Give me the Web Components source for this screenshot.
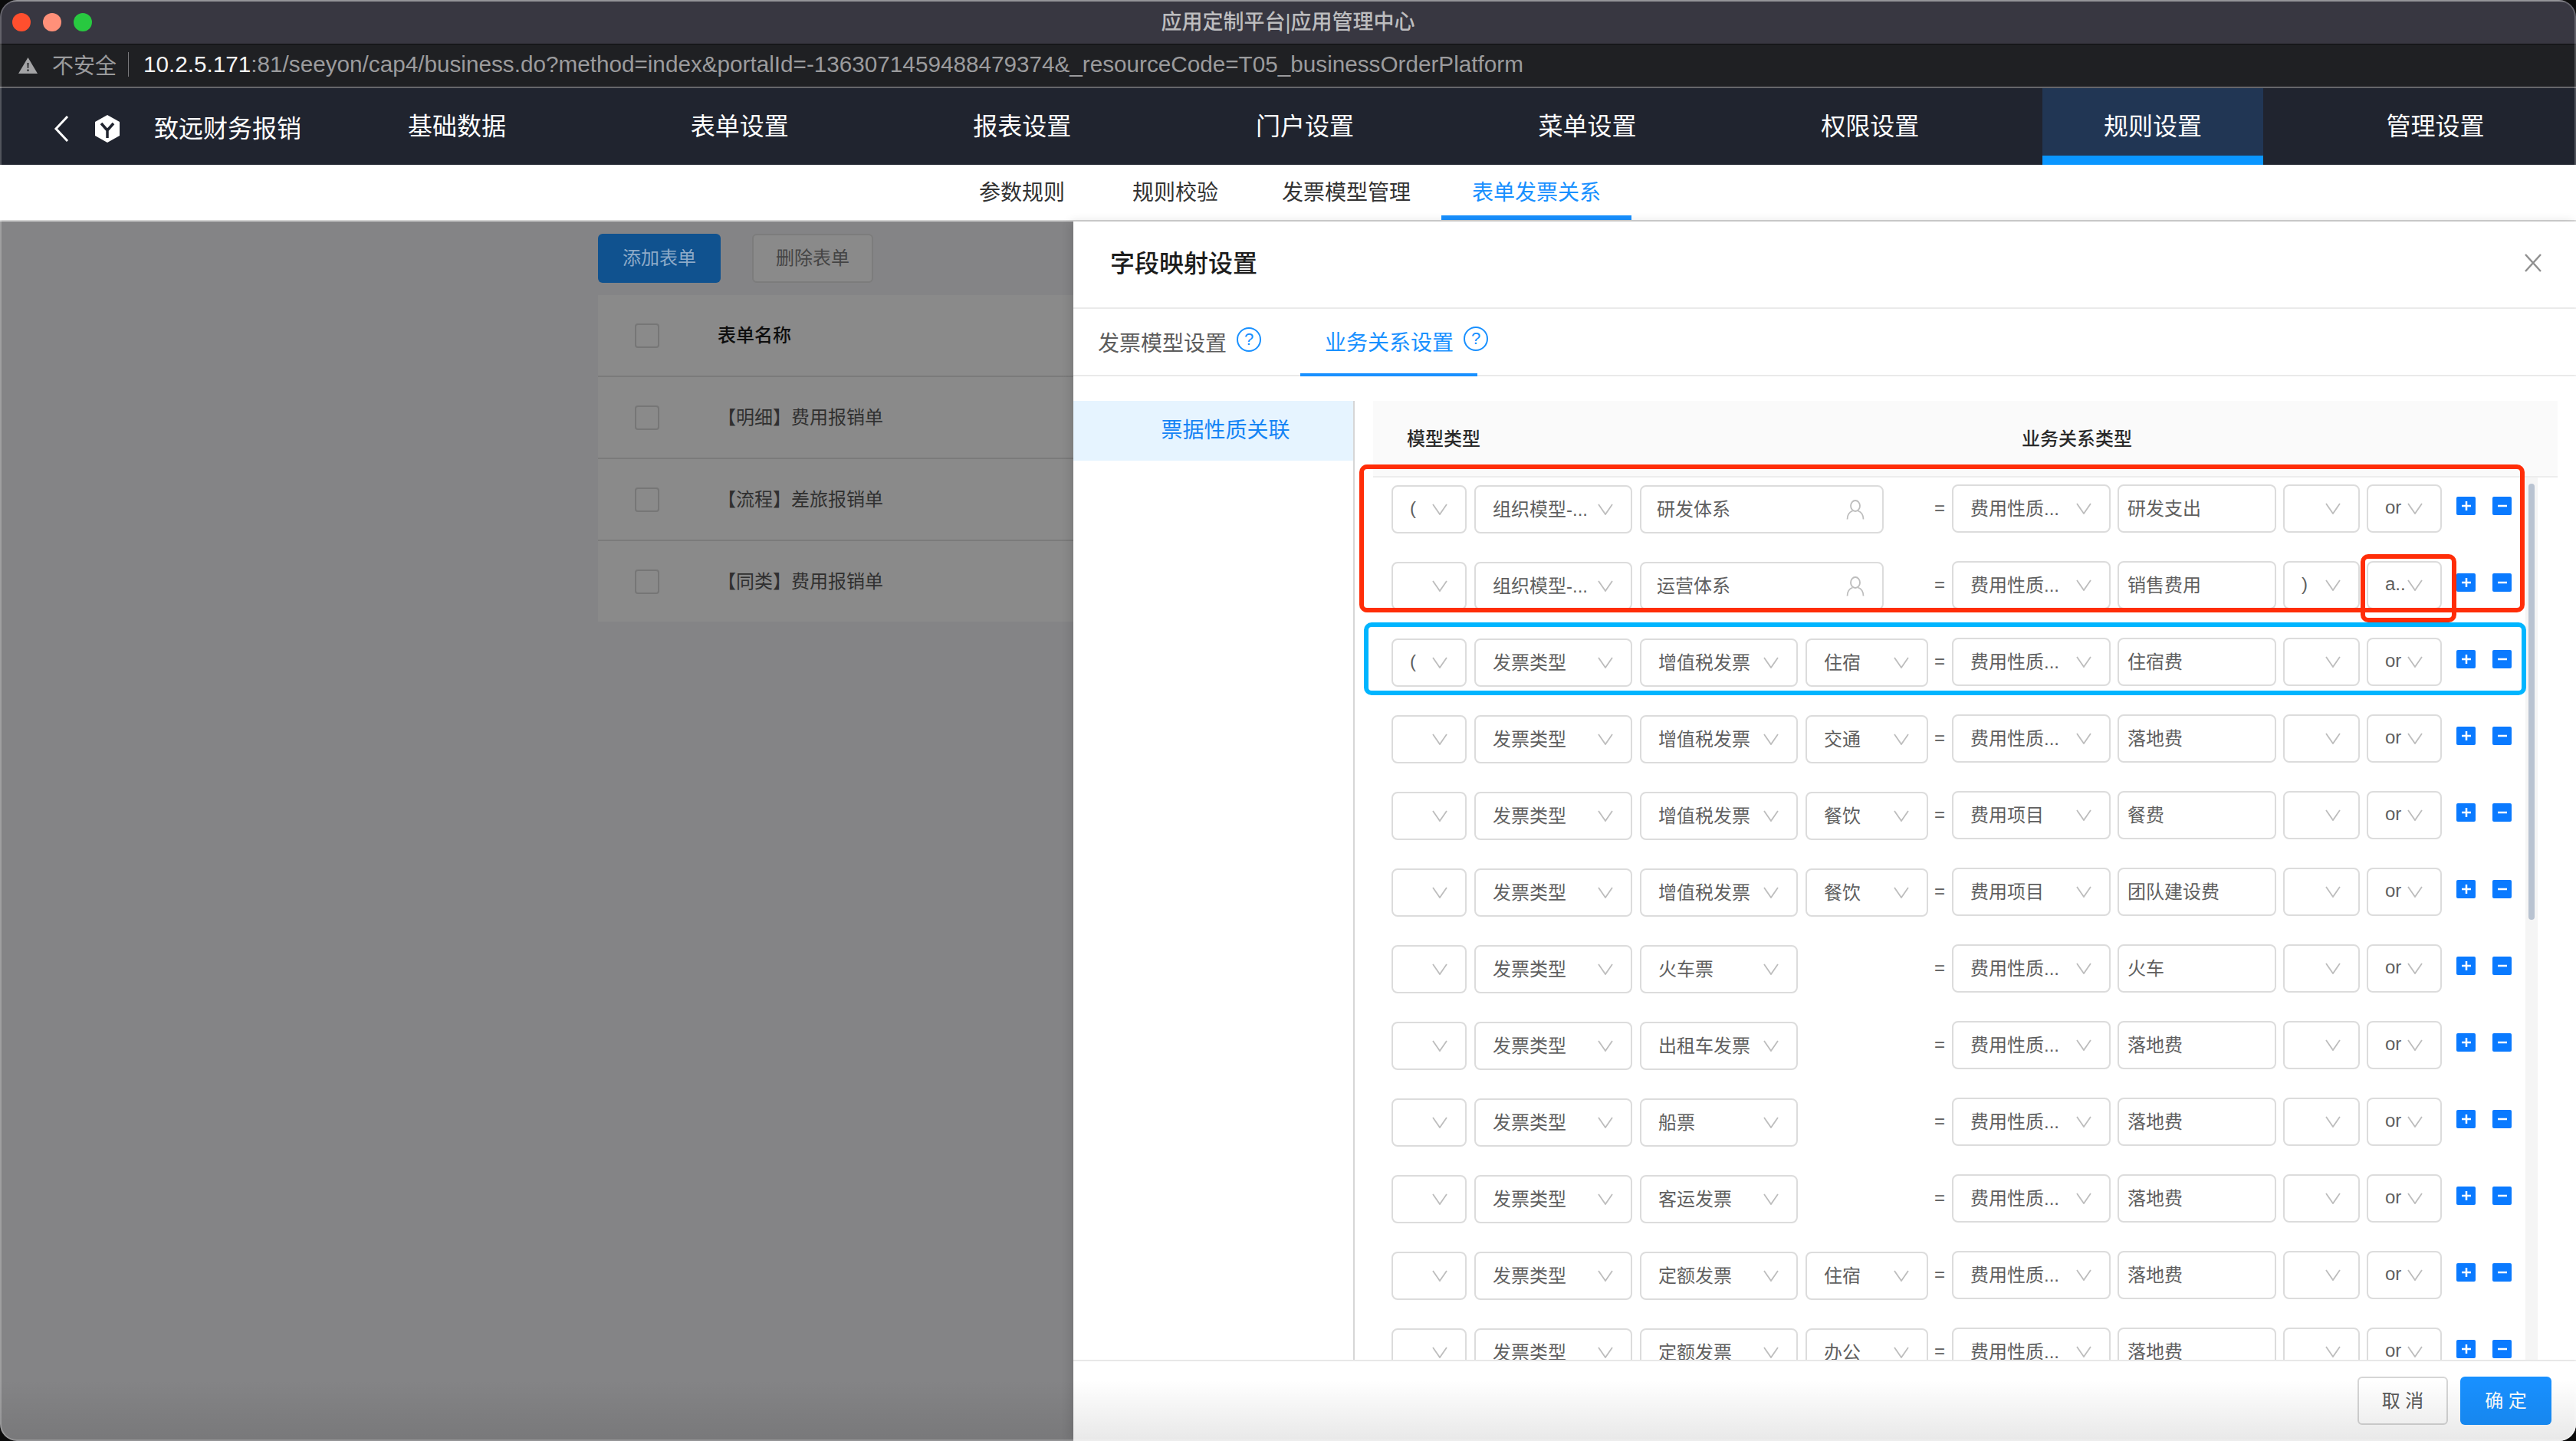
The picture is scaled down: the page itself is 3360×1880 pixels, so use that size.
<!DOCTYPE html>
<html lang="zh-CN">
<head>
<meta charset="utf-8">
<title>应用定制平台|应用管理中心</title>
<style>
  html, body { margin: 0; height: 100%; background: #0b0b0b; overflow: hidden; }
  body { font-family: "Liberation Sans", "Noto Sans CJK SC", sans-serif; }
</style>
</head>
<body>
<app-window></app-window>
<script>
const NAV_ITEMS = ["基础数据", "表单设置", "报表设置", "门户设置", "菜单设置", "权限设置", "规则设置", "管理设置"];
const LIST_ROWS = ["【明细】费用报销单", "【流程】差旅报销单", "【同类】费用报销单"];
const ORG = "组织模型-...";
const INV = "发票类型";
const FEE = "费用性质...";
const ITEM = "费用项目";
const VAT = "增值税发票";
const LAND = "落地费";
// open, type, value, sub, user field?, fee kind, fee name, close, logic
const RULES = [
  ["(", ORG, "研发体系", "", true, FEE, "研发支出", "", "or"],
  ["", ORG, "运营体系", "", true, FEE, "销售费用", ")", "a.."],
  ["(", INV, VAT, "住宿", false, FEE, "住宿费", "", "or"],
  ["", INV, VAT, "交通", false, FEE, LAND, "", "or"],
  ["", INV, VAT, "餐饮", false, ITEM, "餐费", "", "or"],
  ["", INV, VAT, "餐饮", false, ITEM, "团队建设费", "", "or"],
  ["", INV, "火车票", "", false, FEE, "火车", "", "or"],
  ["", INV, "出租车发票", "", false, FEE, LAND, "", "or"],
  ["", INV, "船票", "", false, FEE, LAND, "", "or"],
  ["", INV, "客运发票", "", false, FEE, LAND, "", "or"],
  ["", INV, "定额发票", "住宿", false, FEE, LAND, "", "or"],
  ["", INV, "定额发票", "办公", false, FEE, LAND, "", "or"],
];

class AppWindow extends HTMLElement {
  constructor() {
    super();
    this.attachShadow({ mode: "open" });
  }

  connectedCallback() {
    this.shadowRoot.innerHTML = /* html */`
    <style>
      :host {
        display: flex;
        flex-direction: column;
        width: 3360px;
        height: 1880px;
        position: relative;
        overflow: hidden;
        border-radius: 22px;
      }
      .main { display: flex; flex: 1; min-height: 0; }
      .frame {
        position: absolute;
        inset: 0;
        border-radius: 22px;
        box-shadow: inset 0 0 0 2px rgba(255, 255, 255, .22);
        background: linear-gradient(to bottom, transparent 1800px, rgba(0, 0, 0, .09) 100%);
        pointer-events: none;
      }
    </style>
    <browser-chrome></browser-chrome>
    <top-nav></top-nav>
    <sub-nav></sub-nav>
    <div class="main">
      <form-list></form-list>
      <mapping-panel></mapping-panel>
    </div>
    <div class="frame"></div>`;
  }
}

class BrowserChrome extends HTMLElement {
  constructor() {
    super();
    this.attachShadow({ mode: "open" });
  }

  connectedCallback() {
    this.shadowRoot.innerHTML = /* html */`
    <style>
      :host { display: block; }
      .title {
        height: 48px;
        padding-bottom: 7px;
        border-top: 2px solid #77767c;
        background: #383741;
        position: relative;
        display: flex;
        align-items: center;
        justify-content: center;
        color: #bdbdbf;
        font-size: 27px;
        font-weight: 500;
      }
      .lights { position: absolute; left: 16px; top: 15px; display: flex; gap: 16px; }
      .lights i { width: 24px; height: 24px; border-radius: 50%; }
      .bar {
        height: 52px;
        padding: 0 0 3px 24px;
        border-top: 1px solid #0c0c0e;
        border-bottom: 2px solid #66666a;
        background: #1f2023;
        display: flex;
        align-items: center;
        font-size: 28px;
        color: #9b9b9d;
      }
      .sep { width: 1px; height: 32px; background: #77777a; margin: 0 19px 0 15px; }
      .url { font-size: 29.7px; }
      .host { color: #f4f4f4; }
      svg { display: block; margin: 3px 19px 0 0; }
    </style>
    <div class="title">
      <div class="lights">
        <i style="background:#ff4f2e"></i><i style="background:#ff9079"></i><i style="background:#28c940"></i>
      </div>
      应用定制平台|应用管理中心
    </div>
    <div class="bar">
      <svg width="25" height="21" viewBox="0 0 25 21"><path d="M12.5 0 25 21H0z" fill="#a4a4a6"/><path d="M11.5 7h2l-.3 7h-1.4zM11.5 15.5h2v2.5h-2z" fill="#1f2023"/></svg>
      <span>不安全</span>
      <div class="sep"></div>
      <span class="url"><span class="host">10.2.5.171</span>:81/seeyon/cap4/business.do?method=index&amp;portalId=-1363071459488479374&amp;_resourceCode=T05_businessOrderPlatform</span>
    </div>`;
  }
}

class TopNav extends HTMLElement {
  constructor() {
    super();
    this.attachShadow({ mode: "open" });
  }

  connectedCallback() {
    const items = NAV_ITEMS.map((name) =>
      `<div class="item ${name === "规则设置" ? "active" : ""}">${name}</div>`).join("");
    this.shadowRoot.innerHTML = /* html */`
    <style>
      :host {
        display: flex;
        height: 100px;
        background: #20242f;
        color: #fff;
        font-size: 32px;
      }
      .brand { width: 452px; display: flex; align-items: center; padding-left: 70px; box-sizing: border-box; padding-top: 6px; }
      .brand svg:first-child { margin-right: 34px; }
      .brand span { margin: 0 0 6px 45px; }
      .items { display: flex; gap: 80.67px; }
      .item {
        width: 288px;
        display: flex;
        align-items: center;
        justify-content: center;
        box-sizing: border-box;
        padding-bottom: 6px;
      }
      .active { background: #213654; box-shadow: inset 0 -12px 0 #0a96ff; }
    </style>
    <div class="brand">
      <svg width="20" height="34" viewBox="0 0 20 34"><path d="M18 1 3 17l15 16" fill="none" stroke="#fff" stroke-width="3"/></svg>
      <svg width="32" height="36" viewBox="0 0 32 36"><path d="M16 0 32 9v18l-16 9L0 27V9z" fill="#fff"/><path d="M8 11l8 9 8-9M16 20v10" fill="none" stroke="#20242f" stroke-width="3.5"/></svg>
      <span>致远财务报销</span>
    </div>
    <div class="items">${items}</div>`;
  }
}

class SubNav extends HTMLElement {
  constructor() {
    super();
    this.attachShadow({ mode: "open" });
  }

  connectedCallback() {
    this.shadowRoot.innerHTML = /* html */`
    <style>
      :host {
        display: flex;
        height: 72px;
        background: #fff;
        border-bottom: 2px solid #d2d2d2;
        padding-left: 1237px;
        font-size: 28px;
        color: #333;
      }
      div {
        padding: 0 40px 4px;
        display: flex;
        align-items: center;
        box-sizing: border-box;
        height: 72px;
      }
      .on { color: #1890ff; border-bottom: 6px solid #1890ff; padding-top: 2px; padding-bottom: 0; }
    </style>
    <div>参数规则</div>
    <div style="margin-left:8px">规则校验</div>
    <div style="margin-left:3px">发票模型管理</div>
    <div class="on">表单发票关系</div>`;
  }
}

class FormList extends HTMLElement {
  constructor() {
    super();
    this.attachShadow({ mode: "open" });
  }

  connectedCallback() {
    const rows = LIST_ROWS.map((name) =>
      `<div class="row"><i></i><span>${name}</span></div>`).join("");
    this.shadowRoot.innerHTML = /* html */`
    <style>
      :host {
        display: block;
        width: 1400px;
        background: #848486;
        box-sizing: border-box;
        padding: 16px 0 0 780px;
        font-size: 24px;
      }
      .tools { display: flex; gap: 41px; height: 64px; margin-bottom: 16px; }
      button {
        width: 158px;
        height: 64px;
        border-radius: 6px;
        font: inherit;
        padding: 0 0 6px;
      }
      .add { width: 160px; background: #10528f; border: 0; color: #8daac8; }
      .del { background: #8a8a8a; border: 2px solid #7c7c7c; color: #454545; }
      .row {
        height: 105px;
        display: flex;
        align-items: center;
        background: #8a8a8a;
        border-bottom: 2px solid #7b7b7b;
        color: #303030;
      }
      .row:last-child { border-bottom: 0; }
      .row i {
        width: 28px;
        height: 28px;
        border: 2px solid #767676;
        border-radius: 4px;
        margin: 0 76px 0 48px;
      }
      .row span { margin-bottom: 5px; }
      .head { color: #0e0e0e; font-weight: 500; }
    </style>
    <div class="tools">
      <button class="add">添加表单</button>
      <button class="del">删除表单</button>
    </div>
    <div class="row head"><i></i><span>表单名称</span></div>
    ${rows}`;
  }
}

class HelpMark extends HTMLElement {
  constructor() {
    super();
    this.attachShadow({ mode: "open" });
  }

  connectedCallback() {
    this.shadowRoot.innerHTML = /* html */`
    <style>
      :host {
        display: flex;
        align-items: center;
        justify-content: center;
        width: 32px;
        height: 32px;
        box-sizing: border-box;
        flex: none;
        border: 2px solid #1890ff;
        border-radius: 50%;
        color: #1890ff;
        font-size: 22px;
        margin: 0 0 5px 13px;
      }
    </style>?`;
  }
}

class SelBox extends HTMLElement {
  constructor() {
    super();
    this.attachShadow({ mode: "open" });
  }

  connectedCallback() {
    const kind = this.getAttribute("kind") || "select";
    const arrow = `<svg width="20" height="15" viewBox="0 0 20 15"><path d="M1 1l9 13 9-13" fill="none" stroke="#bdbdbd" stroke-width="1.8"/></svg>`;
    const user = `<svg width="24" height="26" viewBox="0 0 24 26"><ellipse cx="12" cy="8" rx="6" ry="7" fill="none" stroke="#bdbdbd" stroke-width="1.8"/><path d="M1.5 25.5c0-6 3-9.500 7-11M22.500 25.500c0-6-3-9.500-7-11" fill="none" stroke="#bdbdbd" stroke-width="1.800"/></svg>`;
    const icon = kind === "select" ? arrow : kind === "user" ? user : "";
    this.shadowRoot.innerHTML = /* html */`
    <style>
      :host {
        display: flex;
        align-items: center;
        flex: none;
        box-sizing: border-box;
        width: var(--w);
        height: 63px;
        padding: 0 var(--end, 23px) 0 var(--start, 22px);
        border: 2px solid #dcdcdc;
        border-radius: 8px;
        background: #fff;
        color: #5f5f5f;
        font-size: 24px;
        white-space: nowrap;
      }
      .t { margin-bottom: 4px; }
      svg { flex: none; display: block; margin-left: auto; }
    </style>
    <span class="t"><slot></slot></span>${icon}`;
  }
}

class RuleRow extends HTMLElement {
  constructor() {
    super();
    this.attachShadow({ mode: "open" });
  }

  connectedCallback() {
    const [open, type, value, sub, isUser, feeKind, feeName, close, logic] = JSON.parse(this.dataset.rule);
    const third = isUser
      ? `<sel-box kind="user" style="--w:318px;--start:20px">${value}</sel-box>`
      : `<sel-box style="--w:206px">${value}</sel-box>`;
    const fourth = sub ? `<sel-box style="--w:160px">${sub}</sel-box>` : "";
    this.shadowRoot.innerHTML = /* html */`
    <style>
      :host { display: flex; height: 100px; padding-left: 48px; }
      .left { display: flex; gap: 10px; width: 699px; margin-top: 1px; }
      .eq { width: 32px; text-align: center; color: #5f5f5f; font-size: 24px; line-height: 60px; margin-top: 1px; }
      .right { display: flex; gap: 9px; }
      .act {
        width: 25px;
        height: 24px;
        margin-top: 16px;
        flex: none;
        background: #0a7aff;
        border-radius: 2px;
        display: flex;
        align-items: center;
        justify-content: center;
      }
      .plus { margin-left: 19px; }
      .minus { margin-left: 22px; }
    </style>
    <div class="left">
      <sel-box style="--w:98px">${open}</sel-box>
      <sel-box style="--w:206px">${type}</sel-box>
      ${third}
      ${fourth}
    </div>
    <div class="eq">=</div>
    <div class="right">
      <sel-box style="--w:207px">${feeKind}</sel-box>
      <sel-box kind="text" style="--w:207px;--start:11px">${feeName}</sel-box>
      <sel-box style="--w:100px">${close}</sel-box>
      <sel-box style="--w:98px">${logic}</sel-box>
    </div>
    <div class="act plus"><svg width="14" height="14" viewBox="0 0 14 14"><path d="M7 1v12M1 7h12" stroke="#fff" stroke-width="2.500"/></svg></div>
    <div class="act minus"><svg width="14" height="14" viewBox="0 0 14 14"><path d="M1 7h12" stroke="#fff" stroke-width="2.500"/></svg></div>`;
  }
}

class MappingPanel extends HTMLElement {
  constructor() {
    super();
    this.attachShadow({ mode: "open" });
  }

  connectedCallback() {
    const rows = RULES.map((r) => `<rule-row data-rule='${JSON.stringify(r)}'></rule-row>`).join("");
    this.shadowRoot.innerHTML = /* html */`
    <style>
      :host {
        display: flex;
        flex-direction: column;
        width: 1960px;
        background: #fff;
        box-shadow: -4px 0 12px rgba(0, 0, 0, .12);
        color: #333;
        position: relative;
      }
      .head {
        height: 112px;
        flex: none;
        border-bottom: 2px solid #eaeaea;
        display: flex;
        align-items: center;
        justify-content: space-between;
        padding: 0 44px 0 48px;
        font-size: 32px;
        font-weight: 500;
        color: #1c1c1c;
      }
      .head span { margin-bottom: 8px; }
      .head svg { margin-bottom: 4px; }
      .tabs {
        height: 86px;
        flex: none;
        border-bottom: 2px solid #eaeaea;
        display: flex;
        font-size: 28px;
        color: #5c5c5c;
      }
      .tab { display: flex; align-items: center; box-sizing: border-box; height: 88px; white-space: nowrap; }
      .tab1 { width: 296px; padding: 0 0 3px 32px; }
      .tab2 {
        width: 231px;
        padding: 0 0 1px 32px;
        color: #1890ff;
        border-bottom: 4px solid #1890ff;
      }
      .body { flex: 1; min-height: 0; display: flex; margin-top: 32px; }
      .side { width: 365px; flex: none; border-right: 2px solid #d6d6d6; }
      .side div {
        height: 78px;
        background: #e6f4ff;
        color: #1584f5;
        font-size: 28px;
        display: flex;
        align-items: center;
        justify-content: center;
        padding: 0 0 6px 32px;
        box-sizing: border-box;
      }
      .table { flex: 1; min-width: 0; display: flex; flex-direction: column; position: relative; overflow: hidden; }
      .thead {
        height: 94px;
        padding-bottom: 4px;
        flex: none;
        margin: 0 24px;
        background: #fafafa;
        border-bottom: 2px solid #ededed;
        display: flex;
        align-items: center;
        font-size: 24px;
        font-weight: 500;
        color: #2a2a2a;
      }
      .thead span:first-child { margin-left: 44px; width: 802px; }
      .rows { flex: 1; min-height: 0; overflow: hidden; padding-top: 9px; }
      .track { position: absolute; left: 1527px; top: 100px; bottom: 0; width: 16px; background: #f5f5f5; }
      .thumb { position: absolute; left: 4px; top: 8px; width: 8px; height: 569px; border-radius: 4px; background: #b9c3d1; }
      .mark { position: absolute; box-sizing: border-box; border: 6px solid; border-radius: 10px; pointer-events: none; }
      .red-a { left: 6px; top: 83px; width: 1520px; height: 193px; border-color: #ff2d08; }
      .red-b { left: 1312px; top: 200px; width: 125px; height: 89px; border-color: #ff2d08; }
      .blue { left: 12px; top: 289px; width: 1516px; height: 95px; border-color: #00b5ff; }
      .foot {
        flex: none;
        border-top: 2px solid #e8e8e8;
        display: flex;
        justify-content: flex-end;
        gap: 16px;
        padding: 20px 32px 0 0;
        box-sizing: border-box;
        height: 106px;
        font-size: 24px;
        background: #fff;
      }
      button { font: inherit; width: 118px; height: 63px; border-radius: 6px; padding: 0 0 4px; }
      .cancel { background: #fff; border: 2px solid #d6d6d6; color: #5a5a5a; }
      .ok { width: 119px; background: #1890ff; border: 0; color: #fff; }
    </style>
    <div class="head">
      <span>字段映射设置</span>
      <svg width="24" height="24" viewBox="0 0 24 24"><path d="M2 1l20 22M22 1 2 23" stroke="#8f8f8f" stroke-width="2.400" fill="none"/></svg>
    </div>
    <div class="tabs">
      <div class="tab tab1">发票模型设置<help-mark></help-mark></div>
      <div class="tab tab2">业务关系设置<help-mark></help-mark></div>
    </div>
    <div class="body">
      <div class="side"><div>票据性质关联</div></div>
      <div class="table">
        <div class="thead"><span>模型类型</span><span>业务关系类型</span></div>
        <div class="rows">${rows}</div>
        <div class="track"><div class="thumb"></div></div>
        <div class="mark red-a"></div>
        <div class="mark red-b"></div>
        <div class="mark blue"></div>
      </div>
    </div>
    <div class="foot">
      <button class="cancel">取 消</button>
      <button class="ok">确 定</button>
    </div>`;
  }
}

customElements.define("sel-box", SelBox);
customElements.define("help-mark", HelpMark);
customElements.define("rule-row", RuleRow);
customElements.define("browser-chrome", BrowserChrome);
customElements.define("top-nav", TopNav);
customElements.define("sub-nav", SubNav);
customElements.define("form-list", FormList);
customElements.define("mapping-panel", MappingPanel);
customElements.define("app-window", AppWindow);
</script>
</body>
</html>
